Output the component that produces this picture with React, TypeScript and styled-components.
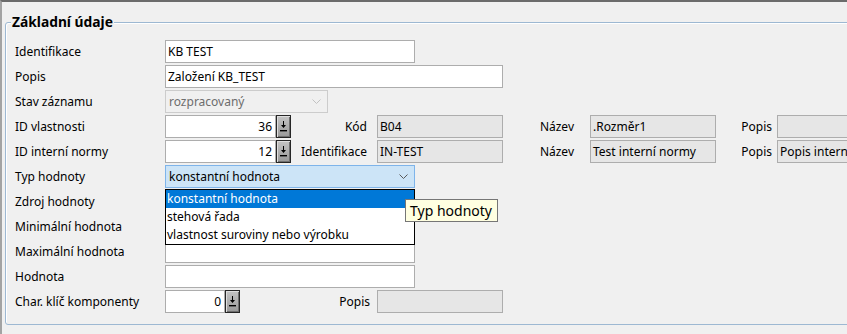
import React from 'react'
import styled, { createGlobalStyle } from 'styled-components'

const GlobalStyle = createGlobalStyle`
  html, body {
    margin: 0;
    padding: 0;
    background: #f0f0f0;
    overflow: hidden;
  }
  body {
    font-family: 'Noto Sans', 'Liberation Sans', sans-serif;
    font-size: 12px;
    color: #000;
  }
`

const Window = styled.div`
  width: 847px;
  height: 334px;
  box-sizing: border-box;
  border-top: 2px solid #6b6b6b;
  border-left: 2px solid #a3a3a3;
  padding: 12px 0 0 3px;
  background: #f0f0f0;
  overflow: hidden;
`

const Group = styled.fieldset`
  margin: 0;
  width: 900px;
  box-sizing: border-box;
  border: 1px solid #9db8d2;
  border-radius: 3px;
  box-shadow: inset 1px 1px 0 #ffffff;
  padding: 0 0 11px 9px;
`

const Legend = styled.legend`
  font-size: 13.8px;
  font-weight: bold;
  line-height: 16px;
  padding: 0 1px;
  margin-left: -4px;
  background: #f0f0f0;
  color: #000;
`

const Form = styled.div`
  display: flex;
  flex-direction: column;
  gap: 2px;
  margin-top: 10px;
`

const Row = styled.div<{ $cols?: string }>`
  display: grid;
  grid-template-columns: ${(p) => p.$cols || '150px auto'};
  align-items: center;
  height: 23px;
`

const Label = styled.span`
  line-height: 23px;
  white-space: nowrap;
`

const SideLabel = styled.span<{ $pad: number }>`
  text-align: right;
  padding-right: ${(p) => p.$pad}px;
  line-height: 23px;
  white-space: nowrap;
`

const TextBox = styled.div<{ $w: number }>`
  width: ${(p) => p.$w}px;
  height: 23px;
  box-sizing: border-box;
  border: 1px solid #adadad;
  background: #fff;
  padding: 0 2px;
  line-height: 21px;
  white-space: nowrap;
  overflow: hidden;
`

const ReadOnlyBox = styled(TextBox)`
  background: #e6e6e6;
`

const NumberWrap = styled.div`
  display: flex;
  height: 23px;
`

const NumberBox = styled(TextBox)`
  text-align: right;
  padding-right: 3px;
`

const SpinButton = styled.div`
  width: 15px;
  height: 23px;
  box-sizing: border-box;
  border: 1px solid #262626;
  background: linear-gradient(#c4c4c4, #989898);
  box-shadow: inset 1px 1px 0 #dedede, inset -1px -1px 0 #6e6e6e;
  display: flex;
  align-items: center;
  justify-content: center;
`

const SelectWrap = styled.div`
  position: relative;
  width: max-content;
`

const SelectBox = styled.div<{ $w: number; $variant: 'disabled' | 'focused' }>`
  width: ${(p) => p.$w}px;
  height: 23px;
  box-sizing: border-box;
  display: flex;
  align-items: center;
  justify-content: space-between;
  padding: 0 6px 0 3px;
  line-height: 21px;
  border: 1px solid ${(p) => (p.$variant === 'focused' ? '#7eb4ea' : '#cccccc')};
  background: ${(p) => (p.$variant === 'focused' ? '#cce4f7' : '#f0f0f0')};
  color: ${(p) => (p.$variant === 'focused' ? '#000' : '#6d6d6d')};
`

const DropList = styled.div`
  position: absolute;
  left: 0;
  top: 24px;
  width: 250px;
  box-sizing: border-box;
  border: 1px solid #000;
  background: #fff;
  z-index: 5;
`

const DropItem = styled.div<{ $active?: boolean }>`
  height: 18px;
  line-height: 18px;
  padding-left: 1px;
  white-space: nowrap;
  background: ${(p) => (p.$active ? '#0078d7' : '#fff')};
  color: ${(p) => (p.$active ? '#fff' : '#000')};
`

const Tooltip = styled.div`
  position: absolute;
  left: 240px;
  top: 34px;
  z-index: 6;
  height: 23px;
  box-sizing: border-box;
  padding: 0 5px 0 4px;
  border: 1px solid #767676;
  background: #ffffe1;
  font-size: 14px;
  line-height: 21px;
  white-space: nowrap;
`

const Chevron = ({ color }: { color: string }) => (
  <svg width="9" height="5" viewBox="0 0 9 5">
    <path d="M0.5 0.5 L4.5 4.5 L8.5 0.5" fill="none" stroke={color} strokeWidth="1" />
  </svg>
)

const DownArrow = () => (
  <svg width="7" height="11" viewBox="0 0 7 11">
    <path d="M3 0 H4 V4 H6 L3.5 7 L1 4 H3 Z" fill="#000" />
    <rect x="0" y="9" width="7" height="1.4" fill="#000" />
  </svg>
)

const NumberField = ({ value, w }: { value: string; w: number }) => (
  <NumberWrap>
    <NumberBox $w={w}>{value}</NumberBox>
    <SpinButton>
      <DownArrow />
    </SpinButton>
  </NumberWrap>
)

const idCols = '150px 126px 86px 126px 87px 126px 61px 126px'

export default function App() {
  return (
    <>
      <GlobalStyle />
      <Window>
        <Group>
          <Legend>Základní údaje</Legend>
          <Form>
            <Row>
              <Label>Identifikace</Label>
              <TextBox $w={250}>KB TEST</TextBox>
            </Row>
            <Row>
              <Label>Popis</Label>
              <TextBox $w={338}>Založení KB_TEST</TextBox>
            </Row>
            <Row>
              <Label>Stav záznamu</Label>
              <SelectBox $w={163} $variant="disabled">
                <span>rozpracovaný</span>
                <Chevron color="#c2c2c2" />
              </SelectBox>
            </Row>
            <Row $cols={idCols}>
              <Label>ID vlastnosti</Label>
              <NumberField value="36" w={111} />
              <SideLabel $pad={10}>Kód</SideLabel>
              <ReadOnlyBox $w={126}>B04</ReadOnlyBox>
              <SideLabel $pad={16}>Název</SideLabel>
              <ReadOnlyBox $w={126}>.Rozměr1</ReadOnlyBox>
              <SideLabel $pad={5}>Popis</SideLabel>
              <ReadOnlyBox $w={126}></ReadOnlyBox>
            </Row>
            <Row $cols={idCols}>
              <Label>ID interní normy</Label>
              <NumberField value="12" w={111} />
              <SideLabel $pad={10}>Identifikace</SideLabel>
              <ReadOnlyBox $w={126}>IN-TEST</ReadOnlyBox>
              <SideLabel $pad={16}>Název</SideLabel>
              <ReadOnlyBox $w={126}>Test interní normy</ReadOnlyBox>
              <SideLabel $pad={5}>Popis</SideLabel>
              <ReadOnlyBox $w={126}>Popis interní normy</ReadOnlyBox>
            </Row>
            <Row>
              <Label>Typ hodnoty</Label>
              <SelectWrap>
                <SelectBox $w={250} $variant="focused">
                  <span>konstantní hodnota</span>
                  <Chevron color="#5a5a5a" />
                </SelectBox>
                <DropList>
                  <DropItem $active>konstantní hodnota</DropItem>
                  <DropItem>stehová řada</DropItem>
                  <DropItem>vlastnost suroviny nebo výrobku</DropItem>
                </DropList>
                <Tooltip>Typ hodnoty</Tooltip>
              </SelectWrap>
            </Row>
            <Row>
              <Label>Zdroj hodnoty</Label>
              <TextBox $w={250}></TextBox>
            </Row>
            <Row>
              <Label>Minimální hodnota</Label>
              <TextBox $w={250}></TextBox>
            </Row>
            <Row>
              <Label>Maximální hodnota</Label>
              <TextBox $w={250}></TextBox>
            </Row>
            <Row>
              <Label>Hodnota</Label>
              <TextBox $w={250}></TextBox>
            </Row>
            <Row $cols="150px 75px 137px 126px">
              <Label>Char. klíč komponenty</Label>
              <NumberField value="0" w={61} />
              <SideLabel $pad={7}>Popis</SideLabel>
              <ReadOnlyBox $w={126}></ReadOnlyBox>
            </Row>
          </Form>
        </Group>
      </Window>
    </>
  )
}
